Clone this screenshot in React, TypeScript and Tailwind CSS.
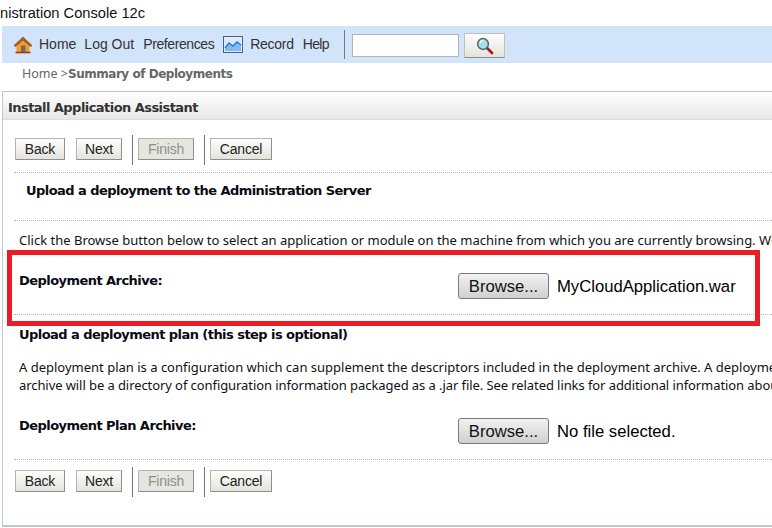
const sans = "font-['Noto_Sans','Liberation_Sans',sans-serif]"
const boldText = "font-bold text-[#0a0a14] font-['DejaVu_Sans',sans-serif] tracking-[-0.55px]"

function HomeIcon() {
  return (
    <svg width="20" height="18" viewBox="0 0 20 18" className="shrink-0">
      <path d="M3.5 9 L10 3.5 L16.5 9 V16 H3.5 Z" fill="#fb9a24" />
      <path d="M1 9.5 L10 1 L19 9.5 L17.5 10.5 L10 4 L2.5 10.5 Z" fill="#a5652a" stroke="#6d3f1a" strokeWidth="0.6" />
      <rect x="8" y="9.5" width="4.5" height="6.5" fill="#6f6a62" />
      <path d="M2.5 16.5 H17.5" stroke="#8c3d22" strokeWidth="1.6" />
    </svg>
  )
}

function RecordIcon() {
  return (
    <svg width="20" height="17" viewBox="0 0 20 17" className="block shrink-0">
      <rect x="0.5" y="0.5" width="19" height="16" fill="#e4eef9" stroke="#44617f" />
      <rect x="2" y="2" width="16" height="13" fill="#dcebf9" />
      <path d="M2 12 L6 7 L10 10 L14 6 L18 9 V15 H2 Z" fill="#7ebcf2" />
      <path d="M2 12 L6 7 L10 10 L14 6 L18 9" fill="none" stroke="#2a78d8" strokeWidth="1.4" />
    </svg>
  )
}

function SearchIcon() {
  return (
    <svg width="18" height="18" viewBox="0 0 18 18">
      <path d="M10.5 10.5 L16 16" stroke="#b3141c" strokeWidth="2.8" strokeLinecap="round" />
      <circle cx="7" cy="7" r="5.4" fill="#a4e0ea" stroke="#55636b" strokeWidth="1.5" />
      <path d="M4 6 A3.4 3.4 0 0 1 7 3.6" fill="none" stroke="#ffffff" strokeWidth="1.2" />
    </svg>
  )
}

function NavButton({ label, width, disabled }: { label: string; width: string; disabled?: boolean }) {
  return (
    <button
      disabled={disabled}
      className={
        "block h-[22px] rounded-none border border-[#b5b5b0] border-b-[#8e8e8a] border-r-[#8e8e8a] text-[14px] leading-none tracking-[-0.2px] font-['Liberation_Sans',sans-serif] " +
        width + " " +
        (disabled
          ? "bg-[#e6e6e0] text-[#8f8f8a]"
          : "bg-gradient-to-b from-[#fdfdfb] to-[#e4e4de] text-[#222222]")
      }
    >
      {label}
    </button>
  )
}

function ButtonBar() {
  return (
    <div className="flex h-[30px] items-center pl-[12px]">
      <div className="mb-[2px] flex items-center">
        <NavButton label="Back" width="w-[50px]" />
        <div className="ml-[11px]"><NavButton label="Next" width="w-[46px]" /></div>
      </div>
      <div className="ml-[10px] mr-[5px] h-[30px] w-px bg-[#777777]" />
      <div className="mb-[2px]"><NavButton label="Finish" width="w-[56px]" disabled /></div>
      <div className="ml-[10px] mr-[5px] h-[30px] w-px bg-[#777777]" />
      <div className="mb-[2px]"><NavButton label="Cancel" width="w-[62px]" /></div>
    </div>
  )
}

function BrowseRow({ label, file }: { label: string; file: string }) {
  return (
    <div className="flex h-[43px]">
      <div className={"w-[444px] pl-[5px] pt-[1px] text-[13px] leading-[18px] " + boldText}>
        {label}
      </div>
      <div className="flex items-start pt-[2px]">
        <button className="h-[26px] w-[91px] rounded-[3px] border border-[#7a7a7a] bg-gradient-to-b from-[#f2f2f2] to-[#d0d0d0] pt-[2px] text-[16.67px] leading-none text-[#111111] font-['Liberation_Sans',sans-serif]">
          Browse...
        </button>
        <span className="ml-[8px] whitespace-nowrap pt-[1px] text-[16.67px] leading-[26px] text-black font-['Liberation_Sans',sans-serif]">{file}</span>
      </div>
    </div>
  )
}

const Dotted = () => <div className="border-t border-dotted border-[#b5b5b5]" />

export default function App() {
  return (
    <div className="relative h-[528px] w-[772px] overflow-hidden bg-white">
      <div className="h-[26px] pt-[4px] text-[14.67px] leading-[18px] text-[#111111] font-['Liberation_Sans',sans-serif]">
        nistration Console 12c
      </div>

      <div className="ml-[2px] flex h-[37px] items-center bg-[#d1e4f9] pl-[11px] text-[14px] text-[#333333] font-['Liberation_Sans',sans-serif]">
        <HomeIcon />
        <span className="ml-[6px]">Home</span>
        <span className="ml-[8px]">Log Out</span>
        <span className="ml-[9px] tracking-[-0.4px]">Preferences</span>
        <span className="ml-[9px]"><RecordIcon /></span>
        <span className="ml-[7px] tracking-[-0.3px]">Record</span>
        <span className="ml-[9px] tracking-[-0.6px]">Help</span>
        <div className="ml-[15px] h-[29px] w-px bg-[#777777]" />
        <input className="ml-[7px] mt-[2px] h-[23px] w-[107px] border border-[#b5b5b0] bg-white" />
        <button className="ml-[5px] mt-[2px] flex h-[25px] w-[41px] items-center justify-center border border-[#c0c0ba] border-b-[#8e8e8a] bg-gradient-to-b from-[#fdfdfb] to-[#e4e4de]">
          <SearchIcon />
        </button>
      </div>

      <div className="h-[28px] pl-[22px] pt-[2px] text-[12.5px] leading-[18px] text-[#666666] font-['Noto_Sans',sans-serif]">
        Home &gt;<b className="font-['DejaVu_Sans',sans-serif] text-[12px] tracking-[-0.47px]">Summary of Deployments</b>
      </div>

      <div className="ml-[2px] h-[436px] border-l border-t border-b-2 border-[#c4c7c8]">
        <div className="flex h-[28px] items-center border-b border-[#dcdcdc] bg-gradient-to-b from-white to-[#e6e7e6] pl-[5px] pt-[4px] text-[13px] font-bold text-[#333333] font-['DejaVu_Sans',sans-serif] tracking-[-0.55px]">
          Install Application Assistant
        </div>

        <div className="pt-[15px]">
          <ButtonBar />
        </div>

        <div className="mt-[7px] ml-[11px]"><Dotted /></div>

        <div className={"h-[47px] pl-[23px] pt-[9px] text-[13px] leading-[18px] " + boldText}>
          Upload a deployment to the Administration Server
        </div>

        <div className="ml-[11px]"><Dotted /></div>

        <div className={"h-[50px] w-[769px] overflow-hidden whitespace-nowrap pl-[16px] pt-[10px] text-[13px] leading-[18px] text-[#111111] " + sans}>
          Click the Browse button below to select an application or module on the machine from which you are currently browsing. When you have
        </div>

        <div className="ml-[11px]">
          <BrowseRow label="Deployment Archive:" file="MyCloudApplication.war" />
          <Dotted />
        </div>

        <div className={"h-[43px] pl-[16px] pt-[11px] text-[13px] leading-[18px] " + boldText}>
          Upload a deployment plan (this step is optional)
        </div>

        <div className={"h-[58px] w-[769px] overflow-hidden whitespace-nowrap pl-[16px] text-[13px] leading-[18px] text-[#111111] " + sans}>
          <div>A deployment plan is a configuration which can supplement the descriptors included in the deployment archive. A deployment plan</div>
          <div className="tracking-[-0.08px]">archive will be a directory of configuration information packaged as a .jar file. See related links for additional information about deployment plans.</div>
        </div>

        <div className="ml-[11px]">
          <BrowseRow label="Deployment Plan Archive:" file="No file selected." />
          <Dotted />
        </div>

        <div className="pt-[7px]">
          <ButtonBar />
        </div>
      </div>

      {/* red annotation drawn over the screenshot */}
      <div className="absolute left-[7px] top-[250px] h-[76px] w-[753px] border-[5px] border-[#ed1c24]" />
    </div>
  )
}
